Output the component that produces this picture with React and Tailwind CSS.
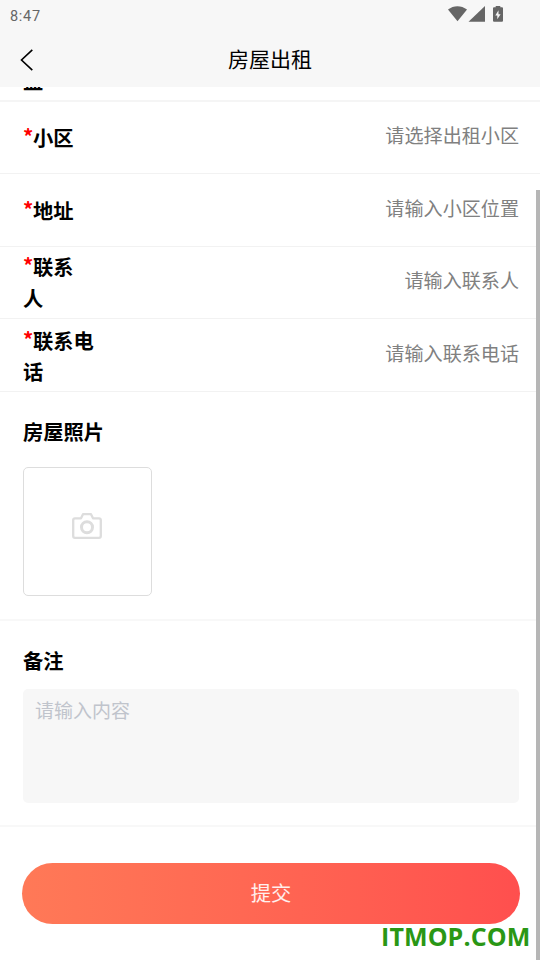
const rows = [
  { label: '小区', hint: '请选择出租小区', box: 'h-[72px]', labelBox: '' },
  { label: '地址', hint: '请输入小区位置', box: 'h-[73px]', labelBox: '' },
  { label: '联系人', hint: '请输入联系人', box: 'h-[72px]', labelBox: 'w-[60px] pb-px' },
  { label: '联系电话', hint: '请输入联系电话', box: 'h-[73px]', labelBox: 'w-[74px] pt-px' },
];

function StatusBar() {
  return (
    <div className="flex h-8 items-center justify-between pl-[10px] pr-[35px] text-[#666]">
      <span className="pt-[2px] font-[Roboto] text-[14.5px] leading-none tracking-[0.7px]">8:47</span>
      <svg width="57" height="17" viewBox="0 0 57 17" fill="currentColor" className="-mt-[3px]">
        <path d="M0 3.6C5.5-.9 13.3-.9 19 3.6L9.5 15.2z" />
        <path d="M20.5 15.7 37 0v15.7z" />
        <path fillRule="evenodd" d="M47.700 0h4.6v1.300h1.700q1 0 1 1v12.400q0 1-1 1h-8q-1 0-1-1V2.300q0-1 1-1h1.700zM50.500 4.300 47.300 9.400h2v3.900l3.300-5.100h-2.100z" />
      </svg>
    </div>
  );
}

function Field({ label, hint, box, labelBox }) {
  return (
    <div className={`flex shrink-0 items-center justify-between border-b border-[#f2f2f2] pl-[23px] pr-[21px] ${box}`}>
      <div className={`text-[20.3px] font-bold leading-[31px] ${labelBox}`}>
        <span className="relative -top-[2px] inline-block w-[10px] leading-none text-[#f00]">*</span>{label}
      </div>
      <div className="-mt-[4px] text-[19.100px] text-[#808080]">{hint}</div>
    </div>
  );
}

export default function App() {
  return (
    <div className="relative flex h-[960px] w-[540px] flex-col overflow-hidden bg-white font-['Noto_Sans_CJK_SC',sans-serif] text-black">
      <header className="h-[87px] shrink-0 bg-[#f7f7f7]">
        <StatusBar />
        <div className="grid h-[55px] grid-cols-[60px_1fr_60px] items-center">
          <svg width="14" height="22" viewBox="0 0 14 22" fill="none" stroke="currentColor" strokeWidth="1.6" className="ml-5">
            <path d="M12.300 .8 1.500 11l10.800 10.200" />
          </svg>
          <h1 className="-mt-[4px] text-center text-[21px] leading-[30px]">房屋出租</h1>
        </div>
      </header>
      <div className="flex h-[15px] shrink-0 flex-col overflow-hidden border-b-2 border-[#f5f5f5] pl-[23px]">
        <span className="-mt-[22px] text-[20.3px] font-bold leading-[31px]">益</span>
      </div>
      {rows.map((row) => <Field key={row.label} {...row} />)}
      <section className="h-[229px] shrink-0 border-b-2 border-[#f8f8f8] px-[23px] pt-[24px]">
        <h2 className="text-[20.3px] font-bold leading-[31px]">房屋照片</h2>
        <div className="mt-[20px] flex h-[129px] w-[129px] items-center justify-center rounded-[5px] border border-[#ddd]">
          <svg width="30" height="26" viewBox="0 0 30 26" fill="none" stroke="#ddd" strokeWidth="2.300" strokeLinejoin="round" className="-ml-px -mt-[12px]">
            <path d="M3 5.300h6L11 1.200h8l2 4.100h6q1.800 0 1.800 1.800v15.900q0 1.800-1.800 1.800H3q-1.800 0-1.800-1.800V7.100Q1.200 5.300 3 5.300z" />
            <circle cx="15" cy="14.300" r="5.500" strokeWidth="3" />
          </svg>
        </div>
      </section>
      <section className="h-[206px] shrink-0 border-b-2 border-[#f8f8f8] pl-[23px] pr-[21px] pt-[24px]">
        <h2 className="text-[20.3px] font-bold leading-[31px]">备注</h2>
        <div className="mt-[13px] h-[114px] rounded-[5px] bg-[#f7f7f7] px-3 pt-[7px] text-[19px] leading-[28px] text-[#c0c4cc]">请输入内容</div>
      </section>
      <button className="ml-[22px] mt-[36px] flex h-[61px] w-[498px] shrink-0 items-center justify-center rounded-full bg-linear-to-r from-[#ff7957] to-[#ff4f4e] pb-[3px] text-[20.3px] text-white/90">提交</button>
      <div className="absolute right-0 top-[190px] h-[770px] w-1 bg-[#b6b6b6]" />
      <div className="absolute left-[381px] top-[920px] font-['Open_Sans',sans-serif] text-[25px] font-bold leading-[32px] tracking-[0.1px] text-[#2a9715]">ITMOP.COM</div>
    </div>
  );
}
